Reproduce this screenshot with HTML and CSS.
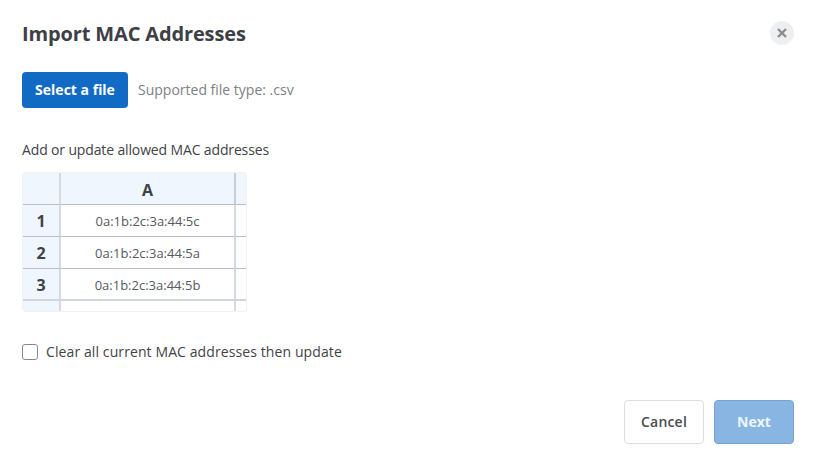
FILE: index.html
```html
<!DOCTYPE html>
<html lang="en">
<head>
    <meta charset="UTF-8">
    <title>Import MAC Addresses</title>
    <link rel="stylesheet" href="styles.css">
</head>
<body>
    <div class="modal">
        <header class="modal-head">
            <h1>Import MAC Addresses</h1>
            <button class="close" aria-label="Close">
                <svg width="10" height="10" viewBox="0 0 10 10"><path d="M1 1l8 8M9 1l-8 8" stroke="#8a8d91" stroke-width="2.4" fill="none"/></svg>
            </button>
        </header>
        <div class="file-row">
            <button class="btn-primary">Select a file</button>
            <span class="hint">Supported file type: .csv</span>
        </div>
        <p class="sheet-title">Add or update allowed MAC addresses</p>
        <div class="sheet">
            <div class="cell head corner"></div>
            <div class="cell head col">A</div>
            <div class="cell head end"></div>

            <div class="cell num">1</div>
            <div class="cell val">0a:1b:2c:3a:44:5c</div>
            <div class="cell end"></div>

            <div class="cell num">2</div>
            <div class="cell val">0a:1b:2c:3a:44:5a</div>
            <div class="cell end"></div>

            <div class="cell num">3</div>
            <div class="cell val">0a:1b:2c:3a:44:5b</div>
            <div class="cell end"></div>

            <div class="cell num last"></div>
            <div class="cell val last"></div>
            <div class="cell end last"></div>
        </div>
        <label class="check">
            <span class="box"></span>
            Clear all current MAC addresses then update
        </label>
        <footer class="modal-foot">
            <button class="btn-cancel">Cancel</button>
            <button class="btn-next">Next</button>
        </footer>
    </div>
</body>
</html>
```

FILE: styles.css
```css
html, body {
    margin: 0;
    padding: 0;
    background-color: #fff;
}

body {
    font-family: "Open Sans", sans-serif;
    color: #3f4347;
}

button {
    font-family: inherit;
    cursor: pointer;
}

.modal {
    width: 816px;
    height: 458px;
    box-sizing: border-box;
    padding: 20px 22px 0;
    overflow: hidden;
}

.modal-head {
    display: flex;
    justify-content: space-between;
    align-items: center;
    height: 26px;
}

    .modal-head h1 {
        margin: 2px 0 0;
        font-size: 20px;
        line-height: 26px;
        font-weight: 700;
        letter-spacing: -0.14px;
        color: #3c4045;
    }

.close {
    width: 24px;
    height: 24px;
    padding: 0;
    border: none;
    border-radius: 50%;
    background-color: #eeeff1;
    display: flex;
    align-items: center;
    justify-content: center;
}

.file-row {
    display: flex;
    align-items: center;
    gap: 10px;
    margin-top: 26px;
}

.btn-primary {
    width: 106px;
    height: 36px;
    padding: 0 0 2px;
    border: none;
    border-radius: 4px;
    background-color: #116bc5;
    color: #fff;
    font-size: 14px;
    font-weight: 700;
}

.hint {
    padding-bottom: 2px;
    font-size: 14px;
    color: #7d8185;
}

.sheet-title {
    margin: 32px 0 0;
    font-size: 14px;
    line-height: 19px;
    letter-spacing: -0.14px;
}

.sheet {
    display: grid;
    grid-template-columns: 38px 175px 10px;
    grid-template-rows: 32px 32px 32px 32px 10px;
    width: 223px;
    margin: 14px 0 0 1px;
    border-radius: 3px;
    overflow: hidden;
    box-shadow: 0 0 0 1px #f0f2f4;
}

.cell {
    display: flex;
    align-items: center;
    justify-content: center;
    box-sizing: border-box;
    border-bottom: 1px solid #b9bec4;
}

.head {
    background-color: #eff6fd;
}

.corner, .num {
    border-right: 2px solid #d5dae0;
}

.col {
    padding-top: 2px;
    font-size: 16px;
    font-weight: 700;
    border-right: 2px solid #c9ced4;
}

.end {
    background-color: #fff;
}

.head.end {
    background-color: #eff6fd;
}

.val {
    font-size: 13px;
    color: #565a5f;
    border-right: 2px solid #d5dae0;
}

.num {
    background-color: #eff6fd;
    font-size: 16px;
    font-weight: 700;
}

.last {
    border-bottom: none;
    border-top: 2px solid #d3d6d9;
    margin-top: -2px;
}

.check {
    display: flex;
    align-items: center;
    gap: 8px;
    margin-top: 31px;
    font-size: 14px;
    line-height: 19px;
    letter-spacing: 0.1px;
}

.box {
    width: 16px;
    height: 16px;
    box-sizing: border-box;
    border: 1px solid #85898e;
    border-radius: 3px;
    background-color: #fff;
}

.modal-foot {
    display: flex;
    justify-content: flex-end;
    gap: 10px;
    margin-top: 39px;
}

.btn-cancel, .btn-next {
    width: 80px;
    height: 44px;
    padding: 0 0 2px;
    border-radius: 4px;
    font-size: 14px;
}

.btn-cancel {
    background-color: #fff;
    border: 1px solid #dcdee0;
    color: #484c50;
    font-weight: 600;
    letter-spacing: 0.2px;
}

.btn-next {
    background-color: #88b5e2;
    border: 1px solid #76a4d2;
    color: #eef5fc;
    font-weight: 700;
}
```
